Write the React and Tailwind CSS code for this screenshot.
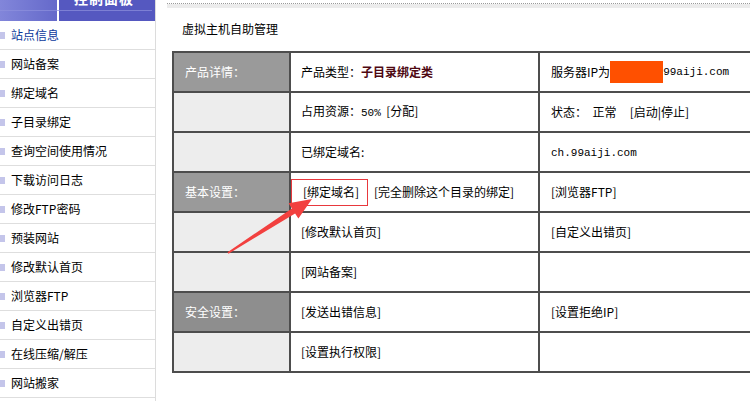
import React from "react";

const CJK = { fontFamily: '"Noto Sans CJK SC", "Noto Sans", sans-serif' };

function M({ children }) {
  return (
    <span className="text-[11px]" style={{ fontFamily: '"Liberation Mono", "DejaVu Sans Mono", monospace' }}>
      {children}
    </span>
  );
}

const menu = [
  "站点信息",
  "网站备案",
  "绑定域名",
  "子目录绑定",
  "查询空间使用情况",
  "下载访问日志",
  "修改FTP密码",
  "预装网站",
  "修改默认首页",
  "浏览器FTP",
  "自定义出错页",
  "在线压缩/解压",
  "网站搬家",
  "",
];

function Label({ children, dark }) {
  return (
    <td className={`h-[40px] border-2 border-[#4d4d4d] pl-[11px] text-white ${dark ? "bg-[#8e8e8e]" : "bg-[#9a9a9a]"}`}>
      {children}
    </td>
  );
}
function Empty() {
  return <td className="h-[40px] border-2 border-[#4d4d4d] bg-[#ededed]"></td>;
}
function Cell({ children, pl = "pl-[10px]" }) {
  return <td className={`h-[40px] border-2 border-[#4d4d4d] bg-white ${pl} text-black`}>{children}</td>;
}

export default function App() {
  return (
    <div className="relative w-[750px] h-[401px] overflow-hidden bg-white text-[12px] leading-[16px]" style={CJK}>
      <div className="flex h-full">
        {/* Sidebar */}
        <div className="w-[156px] shrink-0 border-r border-[#dcdcdc] flex flex-col">
          <div className="relative h-[21px] shrink-0 flex">
            <div className="w-[57px] h-full bg-gradient-to-r from-[#8286da] to-[#6569ca]"></div>
            <div className="w-[2px] h-[6px] bg-white"></div>
            <div className="flex-1 h-full bg-[#5558c0] pl-[15px] overflow-hidden">
              <div className="-mt-[9px] text-[14px] leading-[14px] font-bold text-white tracking-[1px]">控制面板</div>
            </div>
            <div className="absolute left-0 top-[10px] w-[152px] h-px bg-[#8f92dd] opacity-70"></div>
          </div>
          {menu.map((m, i) => (
            <div key={i} className="h-[29px] shrink-0 border-b border-[#dedede] flex items-center">
              <div className="w-[5px] h-[7px] bg-[#c4c5ea] mr-[6px]"></div>
              <span className={i === 0 ? "text-[#0b3a9c]" : "text-black"}>{m}</span>
            </div>
          ))}
        </div>

        {/* Content */}
        <div className="flex-1 pl-[11px] pt-[3px]">
          <div className="border-t border-dotted border-[#9a9a9a]"></div>
          <div className="h-[4px] bg-[#ececec]"></div>
          <div className="mt-[13px] ml-[15px] h-[16px] text-black">虚拟主机自助管理</div>
          <table className="mt-[14px] ml-[5px] border-collapse table-fixed w-[578px]">
            <colgroup>
              <col className="w-[117px]" />
              <col className="w-[249px]" />
              <col className="w-[212px]" />
            </colgroup>
            <tbody>
              <tr>
                <Label>产品详情：</Label>
                <Cell>
                  产品类型：<span className="font-bold text-[#4e0812]">子目录绑定类</span>
                </Cell>
                <Cell pl="pl-[11px]">
                  <span className="inline-flex items-center">
                    服务器IP为<span className="inline-block w-[53px] h-[22px] bg-[#ff5000]"></span>
                    <M>99aiji.com</M>
                  </span>
                </Cell>
              </tr>
              <tr>
                <Empty />
                <Cell>
                  占用资源：<M>50%</M>&nbsp;&nbsp;[分配]
                </Cell>
                <Cell pl="pl-[11px]">
                  状态：&nbsp;&nbsp;正常&nbsp;&nbsp;&nbsp;&nbsp;&nbsp;[启动|停止]
                </Cell>
              </tr>
              <tr>
                <Empty />
                <Cell>已绑定域名:</Cell>
                <Cell pl="pl-[11px]">
                  <M>ch.99aiji.com</M>
                </Cell>
              </tr>
              <tr>
                <Label>基本设置：</Label>
                <Cell pl="pl-0">
                  <span className="inline-flex items-center">
                    <span className="h-[27px] w-[77px] border border-[#e8383d] flex items-center pl-[11px]">[绑定域名]</span>
                    <span className="ml-[6px]">[完全删除这个目录的绑定]</span>
                  </span>
                </Cell>
                <Cell pl="pl-[11px]">[浏览器FTP]</Cell>
              </tr>
              <tr>
                <Empty />
                <Cell>[修改默认首页]</Cell>
                <Cell pl="pl-[11px]">[自定义出错页]</Cell>
              </tr>
              <tr>
                <Empty />
                <Cell>[网站备案]</Cell>
                <Cell></Cell>
              </tr>
              <tr>
                <Label dark>安全设置：</Label>
                <Cell>[发送出错信息]</Cell>
                <Cell pl="pl-[11px]">[设置拒绝IP]</Cell>
              </tr>
              <tr>
                <Empty />
                <Cell>[设置执行权限]</Cell>
                <Cell></Cell>
              </tr>
            </tbody>
          </table>
        </div>
      </div>

      {/* Red arrow annotation */}
      <svg className="absolute left-0 top-0 pointer-events-none" width="750" height="401" viewBox="0 0 750 401">
        <polygon
          points="227.5,252.2 291.9,208.4 288.6,203.3 312,199 298.4,218.5 295.1,213.4 228.5,253.8"
          fill="#f2403f"
        />
      </svg>
    </div>
  );
}
